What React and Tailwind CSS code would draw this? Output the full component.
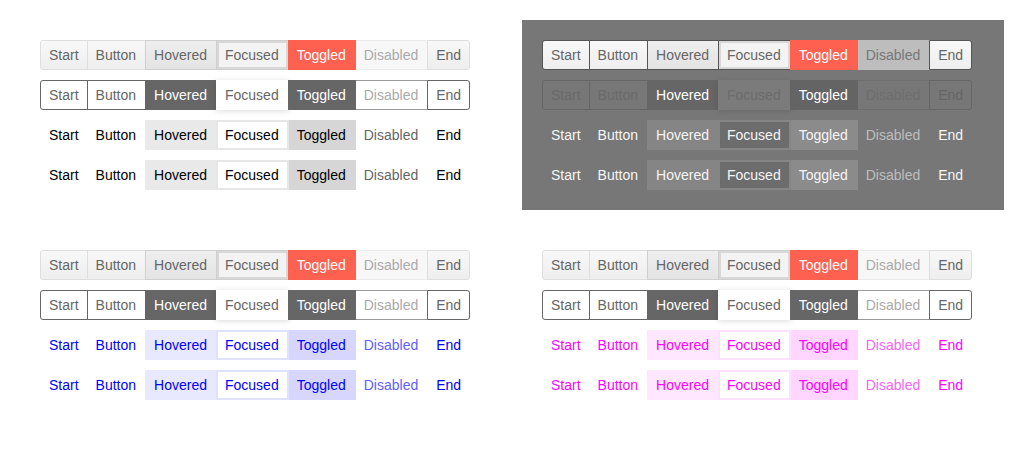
import React from 'react';

const LABELS = ['Start', 'Button', 'Hovered', 'Focused', 'Toggled', 'Disabled', 'End'];

// one class string per button: start, button, hovered, focused, toggled, disabled, end
const STYLES = {
  lightRaised: [
    'bg-linear-to-b from-[#f8f8f8] to-[#eeeeee] border-[#dedede] text-[#666]',
    'bg-linear-to-b from-[#f8f8f8] to-[#eeeeee] border-[#dedede] text-[#666]',
    'bg-linear-to-b from-[#eeeeee] to-[#e4e4e4] border-[#cfcfcf] text-[#666] z-10',
    'bg-[#f3f3f3] border-[#cfcfcf] text-[#666] shadow-[inset_0_0_0_2px_#d8d8d8] z-10',
    'bg-[#ff6150] border-[#ff6150] text-white z-10',
    'bg-[#f7f7f7] border-[#ebebeb] text-[#aaa]',
    'bg-linear-to-b from-[#f8f8f8] to-[#eeeeee] border-[#dedede] text-[#666]',
  ],
  lightOutline: [
    'bg-white border-[#666] text-[#666]',
    'bg-white border-[#666] text-[#666]',
    'bg-[#666] border-[#666] text-white z-10',
    'bg-white border-white text-[#666] shadow-[0_1px_6px_rgba(0,0,0,0.14)] z-10',
    'bg-[#666] border-[#666] text-white z-10',
    'bg-white border-[#999] text-[#aaa]',
    'bg-white border-[#666] text-[#666] z-10',
  ],
  lightFlat: [
    'border-transparent text-black',
    'border-transparent text-black',
    'bg-[#e9e9e9] border-[#e9e9e9] text-black',
    'bg-white border-[#e6e6e6] shadow-[inset_0_0_0_1px_#e6e6e6] text-black z-10',
    'bg-[#d6d6d6] border-[#d6d6d6] border-l-[#c8c8c8] text-black',
    'border-transparent text-[#666]',
    'border-transparent text-black',
  ],
  darkRaised: [
    'bg-linear-to-b from-[#f8f8f8] to-[#eeeeee] border-[#555] text-[#666]',
    'bg-linear-to-b from-[#f8f8f8] to-[#eeeeee] border-[#555] text-[#666]',
    'bg-linear-to-b from-[#eeeeee] to-[#e3e3e3] border-[#555] text-[#666] z-10',
    'bg-[#f3f3f3] border-[#555] text-[#666] shadow-[inset_0_0_0_2px_#d8d8d8] z-10',
    'bg-[#ff6150] border-[#ff6150] text-white z-10',
    'bg-[#bdbdbd] border-[#bdbdbd] text-[#777]',
    'bg-linear-to-b from-[#f8f8f8] to-[#eeeeee] border-[#555] text-[#666]',
  ],
  darkOutline: [
    'border-[#666] text-[#6a6a6a]',
    'border-[#666] text-[#6a6a6a]',
    'bg-[#666] border-[#666] text-white z-10',
    'bg-[#7b7b7b] border-[#7b7b7b] text-[#6c6c6c] shadow-[0_1px_6px_rgba(0,0,0,0.12)] z-10',
    'bg-[#646464] border-[#646464] text-white z-10',
    'border-[#6e6e6e] text-[#6e6e6e]',
    'border-[#666] text-[#666] z-10',
  ],
  darkFlat: [
    'border-transparent text-[#f5f5f5]',
    'border-transparent text-[#f5f5f5]',
    'bg-[#858585] border-[#858585] text-[#f5f5f5]',
    'bg-[#6c6c6c] border-[#858585] shadow-[inset_0_0_0_1px_#858585] text-[#f5f5f5] z-10',
    'bg-[#8b8b8b] border-[#8b8b8b] border-l-[#828282] text-[#f5f5f5]',
    'border-transparent text-[#bdbdbd]',
    'border-transparent text-[#f5f5f5]',
  ],
  blueFlat: [
    'border-transparent text-[#0000ff]',
    'border-transparent text-[#0000ff]',
    'bg-[#e8e8ff] border-[#e8e8ff] text-[#0000ff]',
    'bg-white border-[#e0e0ff] shadow-[inset_0_0_0_1px_#e0e0ff] text-[#0000ff] z-10',
    'bg-[#d6d6ff] border-[#d6d6ff] border-l-[#c8c8ff] text-[#0000ff]',
    'border-transparent text-[#6060ff]',
    'border-transparent text-[#0000ff]',
  ],
  pinkFlat: [
    'border-transparent text-[#ff00ff]',
    'border-transparent text-[#ff00ff]',
    'bg-[#ffe8ff] border-[#ffe8ff] text-[#ff00ff]',
    'bg-white border-[#ffe0ff] shadow-[inset_0_0_0_1px_#ffe0ff] text-[#ff00ff] z-10',
    'bg-[#ffd6ff] border-[#ffd6ff] border-l-[#ffc8ff] text-[#ff00ff]',
    'border-transparent text-[#f566f5]',
    'border-transparent text-[#ff00ff]',
  ],
};

const PANELS = [
  { bg: 'bg-white', rows: ['lightRaised', 'lightOutline', 'lightFlat', 'lightFlat'] },
  { bg: 'bg-[#777]', rows: ['darkRaised', 'darkOutline', 'darkFlat', 'darkFlat'] },
  { bg: 'bg-white', rows: ['lightRaised', 'lightOutline', 'blueFlat', 'blueFlat'] },
  { bg: 'bg-white', rows: ['lightRaised', 'lightOutline', 'pinkFlat', 'pinkFlat'] },
];

function Group({ kind }) {
  const styles = STYLES[kind];
  const last = LABELS.length - 1;
  return (
    <div className="flex">
      {LABELS.map((label, i) => (
        <button
          key={label}
          type="button"
          className={`relative h-[30px] pl-2 border text-[14px] leading-none ${styles[i]} ${i > 0 ? '-ml-px' : 'rounded-l-[3px]'} ${i === last ? 'rounded-r-[3px] pr-2' : i > 0 ? 'pr-[9px]' : 'pr-2'}`}
        >
          {label}
        </button>
      ))}
    </div>
  );
}

export default function App() {
  return (
    <div className="w-[1024px] h-[460px] bg-white p-5 font-['Liberation_Sans',Arial,sans-serif]">
      <div className="grid grid-cols-2 gap-5">
        {PANELS.map((p, i) => (
          <div key={i} className={`h-[190px] p-5 flex flex-col gap-[10px] ${p.bg}`}>
            {p.rows.map((r, j) => (
              <Group key={j} kind={r} />
            ))}
          </div>
        ))}
      </div>
    </div>
  );
}
